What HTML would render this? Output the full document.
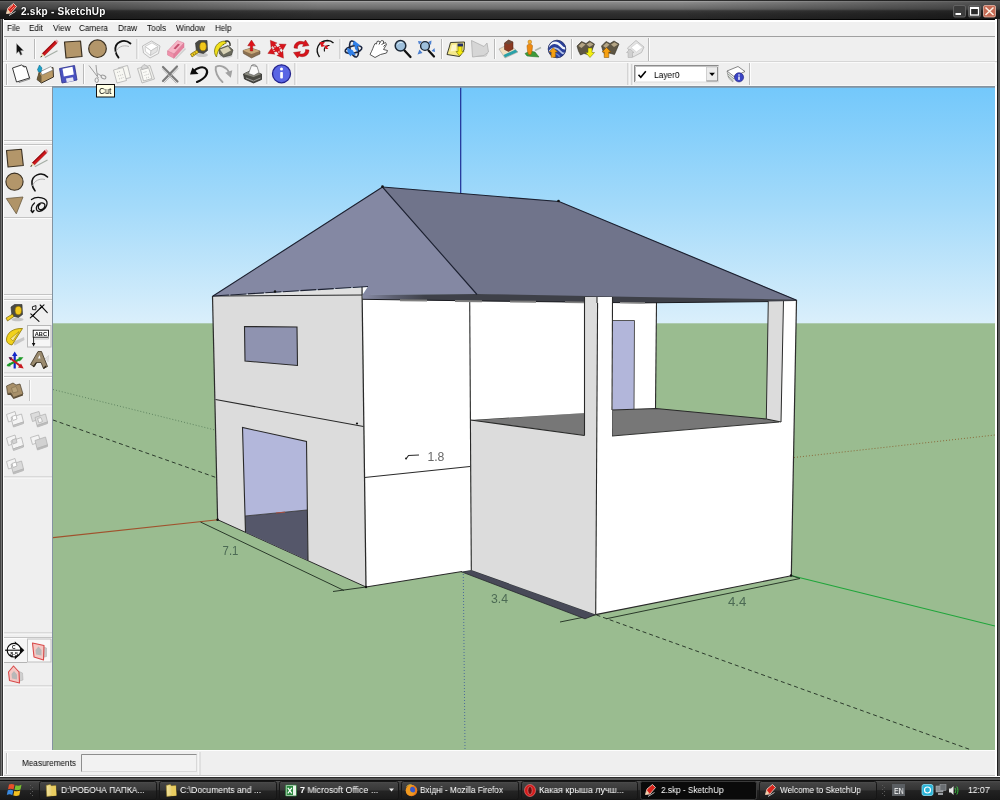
<!DOCTYPE html>
<html>
<head>
<meta charset="utf-8">
<title>2.skp - SketchUp</title>
<style>
html,body{margin:0;padding:0;}
body{width:1000px;height:800px;overflow:hidden;position:relative;background:#efefef;font-family:"Liberation Sans",sans-serif;font-size:9px;color:#000;}
.abs{position:absolute;}
#titlebar{left:0;top:0;width:1000px;height:20px;background:linear-gradient(90deg,rgba(0,0,0,0.42) 0,rgba(0,0,0,0.28) 12%,rgba(0,0,0,0) 32%,rgba(0,0,0,0) 68%,rgba(0,0,0,0.28) 88%,rgba(0,0,0,0.42) 100%),linear-gradient(#303030 0,#303030 1px,#a2a2a2 1px,#a0a0a0 1.8px,#8a8a8a 2.5px,#7c7c7c 5px,#6e6e6e 8px,#626262 9.3px,#3a3a3a 10.8px,#2e2e2e 14px,#272727 18.8px,#050505 19px,#050505 20px);}
#title{left:20px;top:3px;color:#fff;font-weight:bold;font-size:10.5px;line-height:13px;letter-spacing:0.2px;white-space:nowrap;}
#lborder{left:0;top:19px;width:4px;height:758px;background:linear-gradient(90deg,#464646 0,#464646 1px,#777 1px,#777 2px,#333 2px,#333 3px,#fff 3px,#fff 4px);}
#rborder{left:995px;top:19px;width:5px;height:758px;background:linear-gradient(90deg,#fff 0,#fff 2px,#1c1c1c 2px,#1c1c1c 3px,#5c5c5c 3px,#5c5c5c 5px);}
#menubar{left:3px;top:20px;width:994px;height:16px;background:linear-gradient(#fff 0,#fff 1.6px,#f0f0f0 2px,#f0f0f0 16px);border-bottom:1px solid #a0a0a0;}
.menu{position:absolute;top:24px;font-size:8.8px;line-height:11px;white-space:nowrap;}
#canvasborder{left:52px;top:86px;width:943px;height:664px;background:#8493a0;}
#scene{left:0;top:0;}
#statusbar{left:3px;top:750px;width:994px;height:25px;background:#efefef;border-bottom:1px solid #c4c4c4;}
#bborder{left:0;top:776px;width:1000px;height:5px;background:linear-gradient(#fff 0,#fff 1px,#2a2a2a 1px,#2a2a2a 2px,#585858 2px,#585858 4px,#101010 4px,#101010 5px);}
#taskbar{left:0;top:781px;width:1000px;height:19px;background:linear-gradient(#4e4e4e 0px,#404040 2px,#343434 8.6px,#222222 9.6px,#181818 19px);}
.tb{position:absolute;top:781px;height:18px;border-radius:2px;background:linear-gradient(#4e4e4e,#2a2a2a 45%,#1e1e1e);border:1px solid #0a0a0a;box-sizing:border-box;}
.tbt{position:absolute;top:785px;color:#fff;font-size:8.6px;line-height:11px;white-space:nowrap;}
.tx{position:absolute;white-space:nowrap;will-change:transform;transform-origin:0 0;}
.vsep{position:absolute;width:1px;background:#b4b4b4;border-right:1px solid #fff;}
.hsep{position:absolute;height:1px;background:#b4b4b4;border-bottom:1px solid #fff;}
</style>
</head>
<body>
<div id="titlebar" class="abs"></div>
<div id="menubar" class="abs"></div>
<div id="canvasborder" class="abs"></div>
<div id="statusbar" class="abs"></div>
<div id="lborder" class="abs"></div>
<div id="rborder" class="abs"></div>
<div id="bborder" class="abs"></div>
<div id="taskbar" class="abs"></div>
<!--SCENE-->
<svg id="scene" class="abs" width="1000" height="800" viewBox="0 0 1000 800" style="position:absolute;left:0;top:0;will-change:transform">
<defs>
<linearGradient id="sky" x1="0" y1="87" x2="0" y2="323" gradientUnits="userSpaceOnUse">
<stop offset="0" stop-color="#73c8fb"/><stop offset="0.5" stop-color="#a3dafa"/><stop offset="1" stop-color="#daeffb"/>
</linearGradient>
<linearGradient id="band" x1="362" y1="0" x2="425" y2="0" gradientUnits="userSpaceOnUse"><stop offset="0" stop-color="#8a8ea8"/><stop offset="0.5" stop-color="#5c5f70"/><stop offset="1" stop-color="#3e4048"/></linearGradient>
<clipPath id="cv"><rect x="53" y="87.7" width="942" height="662.3"/></clipPath>
</defs>
<g clip-path="url(#cv)">
<rect x="53" y="87" width="942" height="237" fill="url(#sky)"/>
<rect x="53" y="323.3" width="942" height="427" fill="#9abc90"/>
<!-- axes & guide lines on ground -->
<line x1="460.7" y1="87" x2="460.7" y2="194" stroke="#1c2c94" stroke-width="1.2"/>
<line x1="53" y1="537.6" x2="218" y2="519.7" stroke="#a0522d" stroke-width="1.1"/>
<line x1="53" y1="389.5" x2="215" y2="430" stroke="#5f8460" stroke-width="1" stroke-dasharray="1 2"/>
<line x1="53" y1="420" x2="216" y2="477.5" stroke="#2c3a2c" stroke-width="1" stroke-dasharray="4 3"/>
<line x1="794" y1="457.5" x2="995" y2="435" stroke="#8a6a3a" stroke-width="1" stroke-dasharray="1 2"/>
<line x1="791" y1="575.5" x2="995" y2="626" stroke="#1fa53a" stroke-width="1.2"/>
<line x1="596.5" y1="615" x2="970" y2="749.5" stroke="#2c3a2c" stroke-width="1" stroke-dasharray="4 3"/>
<line x1="463.3" y1="574" x2="465" y2="750" stroke="#4a6a9a" stroke-width="1" stroke-dasharray="1 2"/>
<!-- dimension lines -->
<line x1="200.5" y1="522" x2="344" y2="590.5" stroke="#2a3a2a" stroke-width="1"/>
<line x1="333" y1="591.5" x2="366" y2="587" stroke="#2a3a2a" stroke-width="1"/>
<line x1="560" y1="622" x2="596" y2="614.7" stroke="#2a3a2a" stroke-width="1"/>
<line x1="606" y1="618.8" x2="800" y2="578.5" stroke="#2a3a2a" stroke-width="1"/>
<line x1="791" y1="575.5" x2="800" y2="578.5" stroke="#2a3a2a" stroke-width="1"/>
<!-- back wall (white) behind balcony -->
<polygon points="597,299 656.5,300 655.5,412 597,412" fill="#ffffff"/>
<line x1="656.5" y1="301" x2="655.5" y2="409" stroke="#292929" stroke-width="1.1"/>
<!-- door in back wall -->
<polygon points="612.5,320.5 634.5,320.5 634,409 612.5,410" fill="#b2b6da"/>
<line x1="612" y1="320.5" x2="634.5" y2="320.5" stroke="#555" stroke-width="1"/>
<line x1="634.5" y1="320.5" x2="634" y2="409" stroke="#555" stroke-width="1"/>
<!-- balcony floor (dark) -->
<polygon points="612,410 656,408.5 766,419 779,422 612,436" fill="#777777"/>
<polygon points="470.4,420 584.5,412.5 584.5,435.5" fill="#777777"/>
<polyline points="612,410 656,408.5 766,419" fill="none" stroke="#292929" stroke-width="1.1"/>
<line x1="470" y1="420" x2="584.5" y2="412.5" stroke="#292929" stroke-width="1.1"/>
<!-- right column (col 2) -->
<polygon points="768.3,300 783.5,300 781,422 766.3,419" fill="#dcdcdc"/>
<polygon points="783.5,300 796.5,300 791.3,576 595.7,614.5 596.8,437 612,436 779,422 781,422" fill="#ffffff"/>
<line x1="768.3" y1="300" x2="766.3" y2="419" stroke="#2c2c2c" stroke-width="1"/>
<line x1="783.5" y1="300" x2="781" y2="422" stroke="#2c2c2c" stroke-width="1"/>
<line x1="796.5" y1="300" x2="791.3" y2="576" stroke="#2c2c2c" stroke-width="1.2"/>
<line x1="766.3" y1="419" x2="781" y2="422" stroke="#292929" stroke-width="1.1"/>
<line x1="612" y1="436" x2="779" y2="422" stroke="#333" stroke-width="1.05"/>
<line x1="612" y1="410" x2="612" y2="436" stroke="#333" stroke-width="1.05"/>
<!-- dark strip at ground front -->
<polygon points="461.4,571.8 471.3,570 595.7,614.5 585,618.8" fill="#484a58" stroke="#25262c" stroke-width="0.8"/>
<!-- centre white wall -->
<polygon points="362.5,295 469.7,299 471.3,570 462,571.5 366,587" fill="#ffffff"/>
<polygon points="469.7,299 586,299 586,413 470.4,420" fill="#ffffff"/>
<!-- grey wall (front small) + column 1 grey -->
<polygon points="470.4,420 584.5,435.5 584.5,298 597.6,298 595.7,614.5 471.3,570" fill="#dcdcdc"/>
<!-- column 1 white side -->
<polygon points="597.6,298 612.5,298 612,437 596.8,437" fill="#ffffff"/>
<line x1="469.7" y1="300" x2="471.3" y2="570" stroke="#292929" stroke-width="1.1"/>
<line x1="470.5" y1="420" x2="584.5" y2="435.5" stroke="#292929" stroke-width="1.1"/>
<line x1="584.5" y1="300" x2="584.5" y2="435.5" stroke="#292929" stroke-width="1.1"/>
<line x1="597.6" y1="300" x2="595.7" y2="614.5" stroke="#292929" stroke-width="1.1"/>
<line x1="612.5" y1="300" x2="612" y2="410" stroke="#292929" stroke-width="1.1"/>
<line x1="595.7" y1="614.6" x2="791.3" y2="575.8" stroke="#292929" stroke-width="1.1"/>
<line x1="366" y1="587" x2="462" y2="571.5" stroke="#292929" stroke-width="1.1"/>
<line x1="364.5" y1="477.5" x2="470" y2="466.5" stroke="#292929" stroke-width="1.1"/>
<polyline points="406,459 408.5,455.5 419,455" fill="none" stroke="#292929" stroke-width="1.1"/>
<circle cx="406" cy="458.5" r="1" fill="#222"/>
<!-- left grey wall -->
<polygon points="212.5,296 362.5,295 366,587 217.6,519.7" fill="#dcdcdc"/>
<polygon points="213,296 250,294 361,287.5 362.5,295" fill="#e0e0e0"/>
<polygon points="361,287.5 368,286.5 362.5,294.5" fill="#ffffff"/>
<line x1="212.5" y1="296" x2="217.6" y2="519.7" stroke="#2c2c2c" stroke-width="1.2"/>
<line x1="212.5" y1="296" x2="362.5" y2="295" stroke="#292929" stroke-width="1.1"/>
<line x1="362" y1="286.5" x2="366" y2="587" stroke="#292929" stroke-width="1.25"/>
<line x1="217.6" y1="519.7" x2="366" y2="587" stroke="#2c2c2c" stroke-width="1"/>
<line x1="215.5" y1="399.5" x2="363.5" y2="426.5" stroke="#292929" stroke-width="1.1"/>
<!-- window -->
<polygon points="244.5,326.5 297,327 297.5,365.5 245,361" fill="#8f93b0" stroke="#292929" stroke-width="1.1"/>
<!-- door left wall -->
<polygon points="242.5,427.5 306.5,441.5 307,510 245,516" fill="#b3b7db"/>
<polygon points="245,516 307,510 308,560.6 245.5,532.2" fill="#55576a"/>
<polyline points="245.5,532.2 242.5,427.5 306.5,441.5 308,560.6" fill="none" stroke="#292929" stroke-width="1.1"/>
<line x1="245" y1="516" x2="307" y2="510" stroke="#333" stroke-width="0.8"/>
<line x1="276" y1="513" x2="285" y2="512.1" stroke="#b85040" stroke-width="0.9"/>
<!-- roof -->
<polygon points="382.5,187 213,296 250,294 368,286.5 362.5,295 477,294.5" fill="#8488a3"/>
<polygon points="382.5,187 559,201.5 796.7,300 640,298 477,294.5" fill="#70748b"/>
<!-- roof underside band -->
<polygon points="362.5,295 477,294 640,297 796,299.5 796,301 768,301.5 640,303 585,302.3 470,301 363,299.3" fill="url(#band)"/>
<polyline points="362.5,299.3 470,300.8 585,302.2 640,302.9 768,301.6" fill="none" stroke="#1a1b20" stroke-width="1"/>
<line x1="400" y1="300.3" x2="427" y2="300.6" stroke="#808080" stroke-width="2"/>
<line x1="455" y1="300.9" x2="482" y2="301.2" stroke="#808080" stroke-width="2"/>
<line x1="510" y1="301.5" x2="536" y2="301.8" stroke="#7c7c7c" stroke-width="2"/>
<line x1="565" y1="302.1" x2="584" y2="302.3" stroke="#808080" stroke-width="1.8"/>
<line x1="620" y1="302.6" x2="645" y2="302.8" stroke="#8e8e8e" stroke-width="1.2"/>
<polygon points="585,297 597,297 597,303 585,303" fill="#dcdcdc"/><polygon points="597,297 612.5,297 612.5,303 597,303" fill="#fff"/><line x1="584.5" y1="297" x2="584.5" y2="303" stroke="#292929" stroke-width="1.1"/><line x1="597" y1="297" x2="597" y2="303" stroke="#292929" stroke-width="1.1"/><line x1="612.5" y1="297" x2="612.5" y2="303" stroke="#292929" stroke-width="1.1"/>
<polyline points="213,296 382.5,187 477,294.5" fill="none" stroke="#1c2030" stroke-width="1.15"/>
<polyline points="382.5,187 559,201.5 796.7,300.2" fill="none" stroke="#1c2030" stroke-width="1.15"/>
<line x1="213" y1="296" x2="368" y2="286.5" stroke="#1c2030" stroke-width="1.1" stroke-dasharray="16 1.5"/>
<circle cx="382.5" cy="186.5" r="1.3" fill="#111"/>
<circle cx="558.5" cy="201" r="1.3" fill="#111"/>
<circle cx="275" cy="291.5" r="1.2" fill="#111"/>
<circle cx="357" cy="423.5" r="1.1" fill="#111"/>
<circle cx="217.6" cy="519.7" r="1.3" fill="#111"/>
<circle cx="366" cy="587" r="1.2" fill="#111"/>
<circle cx="791" cy="575.5" r="1.2" fill="#111"/>
<!-- dimension texts -->
<g font-family="Liberation Sans, sans-serif" font-size="13" fill="#4c6a54">
<text x="222.6" y="554.6" textLength="15.8" lengthAdjust="spacingAndGlyphs">7.1</text>
<text x="491" y="603.2" textLength="17" lengthAdjust="spacingAndGlyphs">3.4</text>
<text x="728" y="606" textLength="18.4" lengthAdjust="spacingAndGlyphs">4.4</text>
<text x="427.4" y="460.8" textLength="17" lengthAdjust="spacingAndGlyphs" fill="#686868">1.8</text>
</g>
</g>
</svg>
<!--/SCENE-->
<!--CHROME-->
<svg class="abs" width="1000" height="800" viewBox="0 0 1000 800" style="position:absolute;left:0;top:0;will-change:transform">
<defs>
<linearGradient id="gBtn" x1="0" y1="0" x2="0" y2="1"><stop offset="0" stop-color="#505050"/><stop offset="0.1" stop-color="#444444"/><stop offset="0.47" stop-color="#383838"/><stop offset="0.53" stop-color="#242424"/><stop offset="1" stop-color="#1a1a1a"/></linearGradient>
<linearGradient id="gFold" x1="0" y1="0" x2="1" y2="0"><stop offset="0" stop-color="#f5e7a0"/><stop offset="1" stop-color="#d9b84a"/></linearGradient>
</defs>
<!-- toolbar separators horizontal -->
<rect x="3" y="61" width="994" height="1" fill="#d6d6d6"/>
<rect x="3" y="62" width="994" height="1" fill="#fafafa"/>
<rect x="3" y="85" width="994" height="1" fill="#f6f7f7"/><rect x="4" y="86" width="48" height="1" fill="#b8b8b8"/><rect x="4" y="87" width="48" height="1" fill="#fbfbfb"/>
<!-- toolbar grips -->
<g fill="#b9b9b9">
<rect x="6" y="39" width="1" height="21"/><rect x="6" y="64" width="1" height="21"/>
<rect x="34" y="39" width="1" height="20"/><rect x="136.500" y="39" width="1" height="20"/><rect x="237.500" y="39" width="1" height="20"/>
<rect x="339.500" y="39" width="1" height="20"/><rect x="441" y="39" width="1" height="20"/><rect x="494" y="39" width="1" height="20"/>
<rect x="571" y="39" width="1" height="20"/><rect x="648" y="38" width="1" height="23"/>
<rect x="83" y="64" width="1" height="20"/><rect x="184.500" y="64" width="1" height="20"/><rect x="237.500" y="64" width="1" height="20"/>
<rect x="266.500" y="64" width="1" height="20"/><rect x="294.500" y="63" width="1" height="22"/>
<rect x="627.500" y="63" width="1" height="22"/><rect x="631.500" y="64" width="1" height="21"/><rect x="749" y="63" width="1" height="22"/>
</g>
<g fill="#fdfdfd">
<rect x="7" y="39" width="1" height="21"/><rect x="7" y="64" width="1" height="21"/>
<rect x="35" y="39" width="1" height="20"/><rect x="137.500" y="39" width="1" height="20"/><rect x="238.500" y="39" width="1" height="20"/>
<rect x="340.500" y="39" width="1" height="20"/><rect x="442" y="39" width="1" height="20"/><rect x="495" y="39" width="1" height="20"/>
<rect x="572" y="39" width="1" height="20"/><rect x="649" y="38" width="1" height="23"/>
<rect x="84" y="64" width="1" height="20"/><rect x="185.500" y="64" width="1" height="20"/><rect x="238.500" y="64" width="1" height="20"/>
<rect x="267.500" y="64" width="1" height="20"/><rect x="295.500" y="63" width="1" height="22"/>
<rect x="628.500" y="63" width="1" height="22"/><rect x="632.500" y="64" width="1" height="21"/><rect x="750" y="63" width="1" height="22"/>
</g>
<!-- left toolbar separators -->
<g fill="#c4c4c4">
<rect x="4" y="140" width="48" height="1"/><rect x="4" y="144" width="48" height="1"/><rect x="4" y="217" width="48" height="1"/>
<rect x="4" y="294" width="48" height="1"/><rect x="4" y="299" width="48" height="1"/><rect x="4" y="372.500" width="48" height="1"/><rect x="4" y="376" width="48" height="1"/>
<rect x="4" y="404.500" width="48" height="1"/><rect x="4" y="476.500" width="48" height="1"/>
<rect x="4" y="632.500" width="48" height="1"/><rect x="4" y="637" width="48" height="1"/><rect x="4" y="685.500" width="48" height="1"/>
<rect x="29" y="380" width="1" height="21"/>
</g>
<g fill="#fcfcfc">
<rect x="4" y="141" width="48" height="1"/><rect x="4" y="145" width="48" height="1"/><rect x="4" y="218" width="48" height="1"/>
<rect x="4" y="295" width="48" height="1"/><rect x="4" y="300" width="48" height="1"/><rect x="4" y="373.500" width="48" height="1"/><rect x="4" y="377" width="48" height="1"/>
<rect x="4" y="405.500" width="48" height="1"/><rect x="4" y="477.500" width="48" height="1"/>
<rect x="4" y="633.500" width="48" height="1"/><rect x="4" y="638" width="48" height="1"/><rect x="4" y="686.500" width="48" height="1"/>
<rect x="30" y="380" width="1" height="21"/>
</g>
<!-- hovered buttons on left toolbar -->
<rect x="27.5" y="325.500" width="23.5" height="21.5" fill="#f6f6f6" stroke="#b8b8b8" stroke-width="1"/>
<rect x="27.5" y="639" width="23.5" height="23" fill="#f8f8f8" stroke="#c0c0c0" stroke-width="1"/>
<!-- status bar -->
<rect x="3" y="750" width="994" height="1" fill="#fdfdfd"/>
<rect x="6" y="753" width="1" height="21" fill="#c0c0c0"/><rect x="7" y="753" width="1" height="21" fill="#fdfdfd"/>
<rect x="81.500" y="754.500" width="115" height="17" fill="#f2f2f2" stroke="#d8d8d8" stroke-width="1"/><path d="M81.500 771.500 L81.500 754.500 L196.500 754.500" fill="none" stroke="#8e8e8e" stroke-width="1"/>
<rect x="198.500" y="752" width="1" height="23" fill="#fdfdfd"/><rect x="199.500" y="752" width="1" height="23" fill="#d0d0d0"/>
<!-- tooltip -->
<rect x="96.500" y="84.500" width="18" height="12.500" fill="#ffffe6" stroke="#111" stroke-width="1"/>
<!--ICONS-->
<!-- ROW 1 ICONS -->
<g id="row1">
<!-- select arrow -->
<path d="M16.500 43.500 L16.500 53.500 L18.800 51.500 L20.500 55.200 L22.200 54.400 L20.600 50.800 L23.600 50.600 Z" fill="#111" stroke="#aaa" stroke-width="0.5"/>
<!-- pencil -->
<g>
<path d="M44.80 57.40 L57.50 50.70" stroke="#a4ada4" stroke-width="1.1" fill="none"/>
<path d="M44.38 55.75 L57.27 43.01 L55.09 40.80 L42.20 53.55 Z" fill="#d3161b" stroke="#7a1010" stroke-width="0.45"/>
<path d="M42.20 53.55 L55.09 40.80 L55.79 41.51 L42.90 54.26 Z" fill="#9a0c12"/>
<path d="M57.27 43.01 L58.69 41.60 L56.51 39.40 L55.09 40.80 Z" fill="#eaa0a8"/>
<path d="M40.30 57.60 L44.38 55.75 L42.20 53.55 Z" fill="#e8cfa0"/>
<path d="M40.30 57.60 L42.14 56.76 L41.16 55.77 Z" fill="#1a1a1a"/>
</g>
<!-- rectangle -->
<path d="M64.500 42 L80.500 41 L82 56.500 L66 58 Z" fill="#b3966a" stroke="#3a3022" stroke-width="1.2" stroke-linejoin="round"/>
<!-- circle -->
<circle cx="97.500" cy="48.700" r="8.800" fill="#b3966a" stroke="#3a3022" stroke-width="1.2"/>
<!-- arc -->
<path d="M130.500 43.500 C124 38 114 42 115.500 51 C116 54 117 56 118.500 57.500" fill="none" stroke="#111" stroke-width="1.8" stroke-linecap="round"/>
<path d="M129 46.500 C123 44.500 117 47 115.500 53" fill="none" stroke="#aaa" stroke-width="0.9"/>
<!-- make component -->
<g stroke="#b0b0b0" stroke-width="0.800" stroke-linejoin="round">
<path d="M142.500 46 L151.500 41 L160 46 L158.500 53.500 L150 58 L143.500 53 Z" fill="#f2f2f2"/>
<path d="M145 46.500 L152 42.800 L158 46.500 L151 50.800 Z" fill="#ffffff" stroke="#c4c4c4"/>
<path d="M145 46.500 L151 50.800 L150.500 55.500 L145.500 51.500 Z" fill="#ffffff" stroke="#c4c4c4"/>
<path d="M151 50.800 L158 46.500 L157 51.500 L150.500 55.500 Z" fill="#e4e4e4" stroke="#c4c4c4"/>
</g>
<!-- eraser -->
<g>
<path d="M175.500 58.800 L185.500 48.500" stroke="#cfcfcf" stroke-width="1.600"/>
<path d="M167.500 51 L177.500 40.500 L184 43 L174 54 Z" fill="#f7b4c6" stroke="#d47a94" stroke-width="0.500"/>
<path d="M167.500 51 L174 54 L174 58.300 L167.500 55 Z" fill="#f090aa" stroke="#d47a94" stroke-width="0.500"/>
<path d="M174 54 L184 43 L184 47.300 L174 58.300 Z" fill="#e67f9c" stroke="#d47a94" stroke-width="0.500"/>
<path d="M173.500 48.500 L178 43.700 L180 44.500 L175.500 49.300 Z" fill="#c4506e"/>
</g>
<!-- tape measure -->
<g>
<ellipse cx="202" cy="55" rx="6" ry="2" fill="#c9c9c9"/>
<path d="M195.500 43 L199 40.500 L207 40.500 L207.500 50.500 L203.500 53.500 L196.500 52 Z" fill="#4a4a44" stroke="#2a2a28" stroke-width="0.6"/>
<ellipse cx="203" cy="46.500" rx="3.300" ry="4.300" fill="#f2c81c" stroke="#8a6a00" stroke-width="0.6"/>
<path d="M190.500 54 L197 50 L198.500 52.500 L192 57 Z" fill="#f0cc20" stroke="#5a4a00" stroke-width="0.6"/>
<path d="M193 53.500 L194 55 M195 52.300 L196 53.800" stroke="#3a3000" stroke-width="0.6"/>
</g>
<!-- paint bucket -->
<g>
<ellipse cx="226" cy="56" rx="6.500" ry="1.800" fill="#cfcfcf"/>
<path d="M219 49 L228 45.500 L233 50 L231.500 55 L223.500 57 L219.500 54 Z" fill="#6a6a5c" stroke="#33332c" stroke-width="0.6"/>
<path d="M220 49.500 L228 46.500 L231 50.500 L223.500 54.500 Z" fill="#d9d3b6"/>
<path d="M223 45 C224 39.500 231 39.500 230 46" fill="none" stroke="#33332c" stroke-width="1.400"/>
<path d="M214.500 51 C215 45 219 41.500 224.500 41 L226.500 43 C221 45 218 49 216.500 57 C215 55 214.500 53 214.500 51 Z" fill="#f2e11c" stroke="#6a6400" stroke-width="0.7"/>
</g>
<!-- push/pull -->
<g>
<path d="M243 50.500 L251 48 L260 51 L260 54 L251.500 58 L243.500 53.500 Z" fill="#8a6f50" stroke="#4a3a28" stroke-width="0.5"/>
<path d="M243 50.500 L251 48 L260 51 L251.500 54 Z" fill="#c9a878"/>
<path d="M251.500 40 L255.300 45.800 L252.700 45.800 L252.700 51 L250.300 51 L250.300 45.800 L247.700 45.800 Z" fill="#e01018" stroke="#8a0a0a" stroke-width="0.4"/>
</g>
<!-- move -->
<g fill="#d8141c" stroke="#8a0a0a" stroke-width="0.3">
<path d="M278.2 48.4 L275.0 44.1 L277.1 43.0 L270.3 40.3 L271.0 47.5 L272.6 45.8 L275.8 50.2 Z"/>
<path d="M277.7 50.6 L281.9 48.3 L282.6 50.5 L286.2 44.2 L278.9 43.9 L280.4 45.7 L276.3 48.0 Z"/>
<path d="M275.8 50.2 L278.9 54.4 L276.8 55.4 L283.5 58.2 L282.9 51.0 L281.3 52.6 L278.2 48.4 Z"/>
<path d="M276.4 47.9 L272.5 49.7 L271.9 47.4 L267.8 53.4 L275.0 54.3 L273.7 52.4 L277.6 50.7 Z"/>
<circle cx="277" cy="49.3" r="2.3" stroke="none"/>
</g>
<g fill="#fff"><circle cx="275.0" cy="46.7" r="0.7"/><circle cx="279.9" cy="47.7" r="0.7"/><circle cx="278.9" cy="52.0" r="0.7"/><circle cx="274.0" cy="50.6" r="0.7"/></g>
<!-- rotate -->
<g>
<path d="M294 48 C294 42.500 299.500 40 304 42 L305.500 40 L309 45.500 L302.500 46.500 L303.500 44.500 C300 43 297 45 297.500 48.500 Z" fill="#d8141c" stroke="#8a0a0a" stroke-width="0.4"/>
<path d="M309 50 C309 55.500 303.500 58 299 56 L297.500 58 L293.500 52.500 L300.500 51.500 L299.500 53.500 C303 55 306 53 305.500 49.500 Z" fill="#d8141c" stroke="#8a0a0a" stroke-width="0.4"/>
</g>
<!-- offset -->
<g>
<path d="M319.500 57 C314.500 50 318 41 327.500 40.500 C330 40.500 332 41.500 333.500 43" fill="none" stroke="#111" stroke-width="1.300"/>
<path d="M324.500 51.500 C323.500 47.500 326 45 329.500 45.500" fill="none" stroke="#111" stroke-width="1.100"/>
<path d="M319.500 42 L325 42 L323 44.500 L325 46 L321.500 47 Z" fill="#d8141c"/>
<path d="M324.500 45.500 L328.500 46 L327 47.500 L328.500 49 L325.500 49 Z" fill="#d8141c"/>
</g>
<!-- orbit -->
<g>
<ellipse cx="353.500" cy="49.500" rx="8.500" ry="3.600" fill="none" stroke="#1a2540" stroke-width="1.600" transform="rotate(-12 353.500 49.500)"/>
<ellipse cx="354" cy="49" rx="3.800" ry="8.300" fill="none" stroke="#1a2540" stroke-width="1.600" transform="rotate(-18 354 49)"/>
<path d="M354 40.500 L360.500 45.500 L357.500 46 L358 52 L355 49 L354.500 45 L352.500 45 Z" fill="#2f7fe8"/>
<path d="M347 48 L352.500 50 L356 55.500 L352 54.500 L350.500 56.500 L347.500 52 Z" fill="#2f7fe8"/>
</g>
<!-- pan (hand) -->
<g>
<path d="M370 54.500 C372.500 50 373.500 46 375 43.500 L376.500 44 L377 41.500 L379 41 L380 42.500 L381.500 40.500 L383.500 41 L383.500 43.500 L385.500 42.500 L386.500 44.500 L383.500 49.500 L387.500 50.500 L386.500 53 L380.500 54.500 L375 57.500 Z" fill="#fff" stroke="#444" stroke-width="0.9" stroke-linejoin="round"/>
<path d="M379 44.500 L380 42.500 M381.500 45 L383.500 43 M383.500 46.500 L385.500 44.500" stroke="#222" stroke-width="0.8"/>
</g>
<!-- zoom -->
<g>
<path d="M404.500 50.500 L410.500 57" stroke="#111" stroke-width="2.300" stroke-linecap="round"/>
<circle cx="400.500" cy="45.800" r="5.300" fill="#9ec0dc" stroke="#1c2836" stroke-width="1.500"/>
<path d="M397.500 44.500 C398.500 42.500 400.500 42 402.500 42.500" stroke="#dff0fb" stroke-width="1" fill="none"/>
</g>
<!-- zoom extents -->
<g>
<path d="M418 41 L422 41.500 L419 44.500 Z M431.500 40.500 L431 45 L428 42 Z M417.500 54.500 L419.500 49.500 L422.500 53 Z M434.500 48 L435 52 L431.500 51 Z" fill="#4a7fd0"/>
<path d="M428.500 50.500 L434 56.500" stroke="#111" stroke-width="2.200" stroke-linecap="round"/>
<circle cx="425" cy="46" r="4.400" fill="#9ec0dc" stroke="#1c2836" stroke-width="1.400"/>
</g>
<!-- previous view (yellow) -->
<g>
<path d="M450.500 42.500 L464.500 42 L464 50 L459.500 56.500 L447 54.500 L449 48 Z" fill="#f5e98a" stroke="#3a3a2a" stroke-width="1"/>
<path d="M452 45 L456 44.500 L456 50.500 L450.500 51.500 Z" fill="#fdf7c8"/>
<path d="M457.500 43.500 L463 43.500 L463 46.500 L457.500 46.500 Z" fill="#24306a"/>
<path d="M458 46.500 L462 46.500 L462 51.500 L464 51.500 L459.500 56 L456 51.500 L458 51.500 Z" fill="#f5ea10" stroke="#5a5a00" stroke-width="0.5"/>
</g>
<!-- next view (gray) -->
<g>
<path d="M471.500 40.500 L484 46.500 L487 43 L488.500 52 L484 55.500 L472.500 57 Z" fill="#d6d6d6" stroke="#aeaeae" stroke-width="0.800"/>
<path d="M476 56.500 L486 56 L487.500 53" fill="none" stroke="#b8b8b8" stroke-width="0.800"/>
</g>
<!-- get models: building on tile -->
<g>
<path d="M499 49 L509 44 L518 52 L505 58 Z" fill="#f2e0c0" stroke="#8a8a8a" stroke-width="0.500"/>
<path d="M503.500 55 L515.500 49.500 L517.500 52 L505 57.500 Z" fill="#2aa0a8"/>
<path d="M504.500 43 L508.500 40 L513 42 L513 49 L508.500 51.500 L504.500 49.500 Z" fill="#8a3a22" stroke="#4a1a10" stroke-width="0.500"/>
<path d="M504.500 43 L508.500 40 L513 42 L508.500 44.500 Z" fill="#6a4a3a"/>
</g>
<!-- person -->
<g>
<path d="M535 50.500 L541 47.500" stroke="#b0b8b0" stroke-width="1.500"/>
<path d="M525 53.500 L530 51 L535 52 L539 57 L532 56.500 L527 56 Z" fill="#3e9a3a" stroke="#1e6a1e" stroke-width="0.500"/>
<path d="M527 46 C527 43.500 532.500 43.500 532.500 46 L532 51 L531 54.500 L528.500 54.500 L527.500 51 Z" fill="#f08a10" stroke="#a05a00" stroke-width="0.500"/>
<circle cx="529.800" cy="42" r="1.900" fill="#f6b030" stroke="#a05a00" stroke-width="0.400"/>
</g>
<!-- globe -->
<g>
<clipPath id="gl"><circle cx="557" cy="49" r="8.600"/></clipPath>
<circle cx="557" cy="49" r="8.800" fill="#2a3f9a"/>
<g clip-path="url(#gl)" fill="none" stroke-linecap="round">
<path d="M548 47 C552 40.500 558 42.500 561 46 C563 48.500 565 49 567 47.500" stroke="#f0f4fa" stroke-width="2.300"/>
<path d="M549 51.500 C553 46.500 557.500 47.500 560 51 C562 53.500 564 54.500 566.500 53" stroke="#b8c8ec" stroke-width="1.800"/>
<path d="M551 56 C554 52.500 557 53 559.500 56.500" stroke="#6a86d0" stroke-width="1.500"/>
</g>
<circle cx="557" cy="49" r="8.800" fill="none" stroke="#1a2660" stroke-width="0.800"/>
<path d="M553.300 47.800 L557.500 52 L555.400 52 L555.400 57.300 L551.200 57.300 L551.200 52 L549.100 52 Z" fill="#f7a010" stroke="#8a5a00" stroke-width="0.500"/>
</g>
<!-- 3d warehouse get -->
<g>
<path d="M577 46 L581.500 41.500 L586 43.500 L589.500 41 L594.500 44 L590 55 L584 53.500 L580.500 55 L578.500 51 Z" fill="#5e5644" stroke="#2e2a20" stroke-width="0.600"/>
<path d="M578.500 46 L582 42.800 L585.500 44.500 L581.500 48 Z" fill="#b4a585"/>
<path d="M586.500 44.500 L590 42.300 L593.500 44.500 L589.500 47 Z" fill="#b4a585"/>
<path d="M588 48 L592 48 L592 52.500 L594.500 52.500 L590 57.500 L585.500 52.500 L588 52.500 Z" fill="#f5f010" stroke="#6a6a00" stroke-width="0.500"/>
</g>
<!-- share -->
<g>
<path d="M601.500 46 L606 41.500 L610 43.500 L614 41 L619 44 L614.500 54.500 L609 53 L605 55 L603 51 Z" fill="#5e5644" stroke="#2e2a20" stroke-width="0.600"/>
<path d="M603 46 L606.500 42.800 L609.500 44.500 L606 48 Z" fill="#b4a585"/>
<path d="M611 44.500 L614.500 42.300 L618 44.500 L614 47 Z" fill="#b4a585"/>
<path d="M606.500 47.500 L611 52 L608.800 52 L608.800 57.500 L604.200 57.500 L604.200 52 L602 52 Z" fill="#f7a010" stroke="#7a4a00" stroke-width="0.500"/>
</g>
<!-- gray house -->
<g>
<path d="M627.500 48 L636 40.500 L644 47 L641.500 52.500 L633 57 Z" fill="#e4e4e4" stroke="#b4b4b4" stroke-width="0.800"/>
<path d="M631 47.500 L637 43 L642.500 47.500 L636.500 52 Z" fill="#ffffff" stroke="#c4c4c4" stroke-width="0.500"/>
<path d="M630 49 L634 52.500 L632.500 52.500 L632.500 57.500 L628 57.500 L628 52.500 L626.500 52.500 Z" fill="#d0d0d0" stroke="#a8a8a8" stroke-width="0.500"/>
</g>
</g>
<!-- ROW 2 ICONS -->
<g id="row2">
<!-- new -->
<g>
<path d="M14.500 69 L24 65.500 L30 79 L19 82.500 Z" fill="#e8e8e8" stroke="#555" stroke-width="0.600"/>
<path d="M12.500 68 L21.500 65 L24 67 L26 66.500 L29.500 78 L16.500 82 Z" fill="#ffffff" stroke="#222" stroke-width="0.900" stroke-linejoin="round"/>
</g>
<!-- open -->
<g>
<path d="M37 79.500 L40 72 L53 67.500 L53.500 77 L41.500 83 Z" fill="#b99a66" stroke="#2a2218" stroke-width="0.900" stroke-linejoin="round"/>
<path d="M40.500 71.500 L51 66.500 L53 70 L42 75 Z" fill="#ffffff" stroke="#555" stroke-width="0.500"/>
<path d="M38.500 72 L41.500 76 L41.500 83 L37 79.500 Z" fill="#6a5a3a"/>
<path d="M37.500 69.500 L39.500 65 L42 68 L41 72 L38.500 72 Z" fill="#1aa0c8" stroke="#0a6080" stroke-width="0.500"/>
</g>
<!-- save -->
<g>
<path d="M59.500 68.500 L74.500 65.500 L77 80 L62 83 Z" fill="#4a52c0" stroke="#2a2e8a" stroke-width="0.800" stroke-linejoin="round"/>
<path d="M62.500 68.700 L72.500 66.800 L73.800 74.500 L63.800 76.500 Z" fill="#ffffff"/>
<path d="M66 78.500 L73 77.200 L73.700 81 L66.700 82.200 Z" fill="#e4e4f4"/>
</g>
<!-- cut (gray) -->
<g fill="none" stroke="#9c9c9c" stroke-width="1">
<path d="M89 65.500 L98.500 78"/>
<path d="M96 65 L96.500 70 L97.500 76"/>
<ellipse cx="96.700" cy="80.200" rx="1.700" ry="2.300"/>
<ellipse cx="103.500" cy="77" rx="2.500" ry="1.700" transform="rotate(25 103.500 77)"/>
<path d="M97.500 73.500 L101.500 76"/>
</g>
<!-- copy (gray) -->
<g fill="#f7f7f2" stroke="#b0b0b0" stroke-width="0.800">
<path d="M118 68 L127.500 65.500 L130.500 77.500 L121 80 Z"/>
<path d="M113.500 70 L123 67.500 L126.500 80.500 L117 83 Z"/>
<path d="M117 72.500 L120 71.500 M118 76 L123 74.500 M119 79 L123.500 77.500" stroke-dasharray="1 1"/>
</g>
<!-- paste (gray) -->
<g fill="#f0f0ec" stroke="#b0b0b0" stroke-width="0.800">
<path d="M137.500 68.500 L150 65.500 L154.500 79 L142 83 Z"/>
<path d="M140.500 69.500 L148.500 67.500 L152 78.500 L143.500 81 Z" fill="#fafaf6"/>
<path d="M141.500 67 L144 64.500 L147 66 L148 68 L142 69.500 Z" fill="#d8d8d8"/>
<path d="M143.500 72.500 L147 71.500 M144.500 75.500 L149 74 M146 78 L149.500 77" stroke-dasharray="1 1"/>
</g>
<!-- delete X (gray) -->
<g stroke="#7a7a7a" stroke-width="2.200" stroke-linecap="round">
<path d="M163 67 L177.500 81.500"/><path d="M177 66.500 L163 81"/>
</g>
<g stroke="#b8b8b8" stroke-width="1" stroke-linecap="round">
<path d="M162.500 69 L176 83"/><path d="M178 68.500 L164.500 82.500"/>
</g>
<!-- undo -->
<path d="M197 82 C206 78 208.500 73 206.500 69.500 C204 65.500 197 67 192.500 72.500" fill="none" stroke="#0c0c0c" stroke-width="2.100" stroke-linecap="round"/>
<path d="M190 74.500 L192.500 67.500 L198.500 74 Z" fill="#0c0c0c"/>
<!-- redo (gray) -->
<path d="M222.500 82 C217.500 77.500 214.800 71 215.800 67 C219.500 64.500 226.500 66.500 229 72.500" fill="none" stroke="#a2a2a2" stroke-width="1.900" stroke-linecap="round" stroke-linejoin="round"/>
<path d="M225.200 72.800 L232.300 70.300 L230.800 77.800 Z" fill="#a2a2a2"/>
<!-- print -->
<g>
<path d="M243.500 74 L251 70.500 L261.500 74 L261.500 79.500 L253.500 83 L244.500 79 Z" fill="#4a4a44" stroke="#1a1a18" stroke-width="0.700"/>
<path d="M243.500 74 L251 70.500 L261.500 74 L253.500 77 Z" fill="#8a8a80"/>
<path d="M248.500 73.500 L251.500 65.500 L257 66.500 L259 72.500 L254 75.500 Z" fill="#fafafa" stroke="#555" stroke-width="0.600"/>
<path d="M251.500 65.500 C253 64 256 64.500 257 66.500" fill="none" stroke="#555" stroke-width="0.600"/>
<path d="M246 78 L253.500 81 L260.500 78" fill="none" stroke="#cfcfcf" stroke-width="0.600"/>
</g>
<!-- info -->
<circle cx="281.500" cy="73.800" r="9" fill="#5a66e4" stroke="#23238e" stroke-width="1.300"/>
<circle cx="281.500" cy="69" r="1.500" fill="#fff"/>
<rect x="280.200" y="72" width="2.700" height="6.500" rx="0.800" fill="#fff"/>
</g>
<!-- LAYER TOOLBAR -->
<g id="layerbar">
<rect x="634.500" y="65.500" width="84" height="16.500" fill="#ffffff" stroke="#dcdcdc" stroke-width="1"/><path d="M634.500 82 L634.500 65.500 L718.500 65.500" fill="none" stroke="#8c8c8c" stroke-width="1"/>
<path d="M635.500 81 L635.500 66.500 L717.500 66.500" fill="none" stroke="#c4c4c4" stroke-width="1"/>
<rect x="706.500" y="67" width="11" height="14" fill="#ececec" stroke="#c8c8c8" stroke-width="0.800"/>
<path d="M706.500 81 L717.500 81 L717.500 67" fill="none" stroke="#8a8a8a" stroke-width="0.900"/>
<path d="M709.200 72.700 L715 72.700 L712.100 76 Z" fill="#000"/>
<path d="M638.500 74.800 L640.800 77.200 L645.800 71.300" fill="none" stroke="#000" stroke-width="1.600"/>
<!-- layer icon -->
<g>
<path d="M727 71 L738 66.500 L745 71.500 L734 76.500 Z" fill="#ffffff" stroke="#555" stroke-width="0.700"/>
<path d="M727.500 73.500 L734 79 M728 76 L733.500 81 " stroke="#6a7a6a" stroke-width="0.700" fill="none"/>
<path d="M727 71 L727.500 73.500 L728 76 L729 78.500 L733 82" fill="none" stroke="#777" stroke-width="0.600"/>
<circle cx="739" cy="77.300" r="4.600" fill="#3a44c4" stroke="#20207a" stroke-width="0.600"/>
<circle cx="739" cy="75" r="0.800" fill="#fff"/><rect x="738.300" y="76.500" width="1.400" height="3.400" fill="#fff"/>
</g>
</g>
<!-- LEFT TOOLBAR ICONS -->
<g id="leftbar">
<!-- rectangle -->
<path d="M6.500 150.500 L21.500 149.300 L23.300 165.500 L8 167 Z" fill="#b3966a" stroke="#3a3022" stroke-width="1.100" stroke-linejoin="round"/>
<!-- pencil -->
<g>
<path d="M34.80 166.70 L47.50 160.00" stroke="#a4ada4" stroke-width="1.1" fill="none"/>
<path d="M34.38 165.06 L46.96 152.71 L44.79 150.50 L32.21 162.85 Z" fill="#d3161b" stroke="#7a1010" stroke-width="0.45"/>
<path d="M32.21 162.85 L44.79 150.50 L45.49 151.21 L32.91 163.56 Z" fill="#9a0c12"/>
<path d="M46.96 152.71 L48.39 151.31 L46.21 149.09 L44.79 150.50 Z" fill="#eaa0a8"/>
<path d="M30.30 166.90 L34.38 165.06 L32.21 162.85 Z" fill="#e8cfa0"/>
<path d="M30.30 166.90 L32.15 166.07 L31.16 165.07 Z" fill="#1a1a1a"/>
</g>
<!-- circle -->
<circle cx="14.500" cy="181.700" r="8.600" fill="#b3966a" stroke="#3a3022" stroke-width="1.100"/>
<!-- arc -->
<path d="M47.500 177 C41.500 171 31 175 32 184 C32.500 187 33.500 189 35 190.800" fill="none" stroke="#111" stroke-width="1.600" stroke-linecap="round"/>
<path d="M45 179.500 C39.500 178 34 181 32.500 186" fill="none" stroke="#aaa" stroke-width="0.900"/>
<!-- polygon (triangle) -->
<path d="M6.300 198.500 L23 197 L16.300 213.800 Z" fill="#b09468" stroke="#6a5a40" stroke-width="0.800" stroke-linejoin="round"/>
<!-- freehand -->
<path d="M31.500 199.500 C37 195.500 48 197.500 47 204 C46 210 38 214 36.500 209.500 C35.500 205 41 201.500 44 203.500 C47 206 42 211.500 39 209 C37.500 207.500 38.500 205 40 204.500 M34.500 203 C31 206 30.500 210 32.500 212.500 L31 210.500 M32.500 212.500 L34 210.500" fill="none" stroke="#111" stroke-width="1.300" stroke-linecap="round"/>
<!-- tape measure -->
<g>
<ellipse cx="17.500" cy="319.500" rx="6" ry="1.800" fill="#c4c4c4"/>
<path d="M11 307 L14.500 304.500 L22 304.500 L22.500 314.500 L18.500 317.500 L12 316 Z" fill="#4a4a44" stroke="#2a2a28" stroke-width="0.600"/>
<ellipse cx="18.300" cy="310.500" rx="3.200" ry="4.200" fill="#f2c81c" stroke="#8a6a00" stroke-width="0.600"/>
<path d="M6 318 L12.500 314 L14 316.500 L7.500 321 Z" fill="#f0cc20" stroke="#5a4a00" stroke-width="0.600"/>
</g>
<!-- dimension -->
<g stroke="#0c0c0c" stroke-width="1.100" fill="none" stroke-linecap="round">
<path d="M32.500 315.800 L42 306.500"/>
<path d="M40.200 305 L47.300 312.600 M30.800 313.800 L39 321.300"/>
<path d="M39.800 308.600 L44 304.800 M30.300 317.800 L34.600 314"/>
<path d="M32.800 306.600 L36 305.600 L35.800 309.800 L32.900 309.600 Z" stroke-width="0.900"/>
</g>
<!-- protractor -->
<g>
<path d="M13 342 L24 337 L24.500 340 L14.500 345.500 Z" fill="#c8c8c8"/>
<path d="M6.500 340.500 C6 333 13 328 22.500 328.500 L12 345 C9 344.500 7 343 6.500 340.500 Z" fill="#f2d21c" stroke="#8a7400" stroke-width="0.800"/>
<path d="M10.500 338.500 L19 331.500 L13 341 Z" fill="#f8e890" stroke="#8a7400" stroke-width="0.500"/>
</g>
<!-- text tool -->
<g>
<rect x="33.200" y="330.200" width="15.300" height="7" fill="#fff" stroke="#111" stroke-width="0.900"/>
<text x="34.700" y="336.100" font-family="Liberation Sans, sans-serif" font-weight="bold" font-size="5.600" fill="#111" textLength="12.300" lengthAdjust="spacingAndGlyphs">ABC</text>
<path d="M33.600 337 L33.600 344" stroke="#111" stroke-width="0.900"/>
<path d="M31.800 343 L35.400 343 L33.600 346.500 Z" fill="#111"/>
<path d="M35 339 L48.500 339 L48.500 336" stroke="#aaa" stroke-width="0.700" fill="none"/>
</g>
<!-- axes -->
<g>
<path d="M14.700 368.500 L14.700 355" stroke="#1428c8" stroke-width="2.200"/>
<path d="M14.700 351.500 L17.500 356 L12 356 Z" fill="#1428c8"/>
<path d="M7.500 365.500 L21 358.500" stroke="#1e9a28" stroke-width="2"/>
<path d="M23.500 357.200 L19.500 361.500 L18.500 357.200 Z" fill="#1e9a28"/>
<path d="M6.500 366 L10 362.500 L10.500 366.500 Z" fill="#1e9a28"/>
<path d="M10 358 L21 366.500" stroke="#c81a20" stroke-width="2"/>
<path d="M23.700 368.500 L18 367.500 L21 363.500 Z" fill="#c81a20"/>
<path d="M8.500 357 L12.500 357.500 L10.500 360.500 Z" fill="#5a1a50"/>
</g>
<!-- 3d text -->
<g>
<path d="M30.500 364.500 L38 351.500 L41.500 351.500 L47.500 366.500 L43.500 368.500 L41 362.500 L36.500 362.500 L34.500 366.500 Z" fill="#9a8a6e" stroke="#3a3020" stroke-width="0.800" stroke-linejoin="round"/>
<path d="M38 358.500 L39.500 355 L40.500 358.500 Z" fill="#f0f0f0"/>
<path d="M33 367 L36.500 362.500 M43.500 368.500 L46 366" stroke="#2a2418" stroke-width="1.200"/>
<path d="M45 359 L48.500 355.500 L48 362" fill="#e0e0e0" stroke="#c0c0c0" stroke-width="0.500"/>
</g>
<!-- brown blocks -->
<g>
<path d="M6.500 386 L13 383 L16 385 L20 384 L23 394 L13.500 397.500 L11 393 L7.500 393.500 Z" fill="#a8906a" stroke="#4a3e2a" stroke-width="0.700" stroke-linejoin="round"/>
<path d="M7.500 393.500 L11 393 L13.500 397.500 L23 394 L23 395.500 L13.500 399 L10.500 395 L7.500 395 Z" fill="#5a4a32"/>
<path d="M11.500 388 L16 386.500 L18 391.500 L13 393 Z" fill="#b8a27a" stroke="#6a5a40" stroke-width="0.400"/>
</g>
<!-- gray solid tools -->
<g fill="#f4f4f4" stroke="#b2b2b2" stroke-width="0.800" stroke-linejoin="round">
<path d="M6.500 414.500 L15 411.500 L17 419 L8.500 422 Z"/>
<path d="M11 417.500 L21.500 414 L23.500 422 L13 425.500 Z"/>
<path d="M12 416.500 L16 415 L17 419 L13 420.500 Z" fill="#fff"/>
<path d="M13 425.500 L23.500 422 L23.500 423.500 L13.500 427 Z" fill="#c8c8c8"/>

<path d="M30.500 414 L39 411.500 L41 418.500 L32.500 421.500 Z" fill="#dcdcdc"/>
<path d="M35 417.500 L45.500 414 L47.500 422 L37 425.500 Z" fill="#dcdcdc"/>
<path d="M37.500 418.500 L41 417.500 L42.500 421.500 L39 423 Z" fill="#f4f4f4"/>
<path d="M37 425.500 L47.500 422 L47.500 423.500 L37.500 427 Z" fill="#c0c0c0"/>

<path d="M6.500 438 L15 435 L17 442.500 L8.500 445.500 Z"/>
<path d="M11 441 L21.500 437.500 L23.500 445.500 L13 449 Z"/>
<path d="M12 440 L16 438.500 L17 442.500 L13 444 Z" fill="#d4d4d4"/>
<path d="M13 449 L23.500 445.500 L23.500 447 L13.500 450.500 Z" fill="#c8c8c8"/>

<path d="M30.500 437.500 L38.500 435 L40.500 441.500 L32.500 444.500 Z"/>
<path d="M35 440.500 L45.500 437 L47.500 445 L37 448.500 Z" fill="#d2d2d2"/>
<path d="M37 448.500 L47.500 445 L47.500 446.500 L37.500 450 Z" fill="#bcbcbc"/>

<path d="M6.500 461.500 L15 458.500 L17 466 L8.500 469 Z"/>
<path d="M11 464.500 L21.500 461 L23.500 469 L13 472.500 Z" fill="#dadada"/>
<path d="M12 463.500 L16 462 L17 466 L13 467.500 Z" fill="#fff"/>
<path d="M13 472.500 L23.500 469 L23.500 470.500 L13.500 474 Z" fill="#c0c0c0"/>
</g>
<!-- position camera -->
<g>
<rect x="4" y="639" width="23" height="23" fill="#f5f5f5"/>
<rect x="4" y="662" width="23" height="1" fill="#b4b4b4"/>
<path d="M14.800 641.200 L24.300 650.200 L14.800 659.600 Z" fill="#0a0a0a"/>
<circle cx="14" cy="650.200" r="6.800" fill="#fff" stroke="#0a0a0a" stroke-width="1.200"/>
<path d="M5 650.200 L23 650.200" stroke="#0a0a0a" stroke-width="1.100"/>
<text x="12" y="648.600" font-family="Liberation Sans, sans-serif" font-weight="bold" font-size="5" fill="#111">C</text>
<text x="10.200" y="656.300" font-family="Liberation Sans, sans-serif" font-weight="bold" font-size="4.600" fill="#111" textLength="7.800" lengthAdjust="spacingAndGlyphs">8·5</text>
</g>
<!-- section plane -->
<g>
<path d="M39 645.500 L46.500 648 L46.500 656.500 L39.500 658.500 Z" fill="#c8c8c8" stroke="#aaa" stroke-width="0.500"/>
<path d="M32.500 643 L44 645.500 L43.500 660 L34 657 Z" fill="#f4c8c4" stroke="#d84848" stroke-width="1.100" stroke-linejoin="round"/>
<path d="M35.500 650 L38.500 646.500 L41.500 650 L41.500 655.500 L36 654.500 Z" fill="#b8b8b8"/>
</g>
<!-- pink house -->
<g>
<path d="M16 670 L22.500 673 L23 680 L16.500 682 Z" fill="#cfcfcf" stroke="#aaa" stroke-width="0.500"/>
<path d="M8.500 672 L13.500 666 L19 672 L19.500 683 L9.500 680.500 Z" fill="#f4c8c4" stroke="#d84848" stroke-width="1.100" stroke-linejoin="round"/>
<path d="M11.500 674 L14 671 L17 674.500 L17 679.500 L12 678.500 Z" fill="#b8b8b8"/>
</g>
</g>
<!--/ICONS-->
<!--TASKBAR-->
<!-- TITLE BAR ICON & BUTTONS -->
<g id="titlestuff">
<path d="M6.500 13.500 L8 8 L13.500 3.500 L16.500 6.500 L11 13 Z" fill="#d8241c" stroke="#f0e0d0" stroke-width="0.900"/>
<path d="M6.500 13.500 L8 9.500 L10.500 12.500 Z" fill="#f0d8b0"/>
<path d="M9 9 L13 5 M10.500 10.500 L14.500 6.500" stroke="#f6b0a0" stroke-width="0.700"/>
<path d="M9 15.500 L15.500 11.500" stroke="#ddd" stroke-width="0.900"/>
<rect x="953.500" y="5.500" width="12" height="11.500" rx="1.500" fill="#3c3c3c" stroke="#6a6a6a" stroke-width="0.800"/>
<rect x="955.500" y="13" width="5.500" height="2" fill="#fff"/>
<rect x="968.500" y="5.500" width="12" height="11.500" rx="1.500" fill="#3c3c3c" stroke="#6a6a6a" stroke-width="0.800"/>
<rect x="970.500" y="7.500" width="8" height="7.500" fill="#2a2a2a" stroke="#fff" stroke-width="1.300"/>
<rect x="970" y="7" width="9" height="2" fill="#fff"/>
<rect x="983.500" y="5.500" width="12" height="11.500" rx="1.500" fill="#c46a54" stroke="#e8b8a8" stroke-width="0.800"/>
<path d="M985.500 7.500 L993.500 15 M993.500 7.500 L985.500 15" stroke="#fdf0e4" stroke-width="1.500"/>
</g>
<!-- TASKBAR -->
<g id="tbar">
<!-- start flag -->
<g>
<path d="M9 784.500 C11 783.500 13 783.800 14.500 784.800 L13.500 789.500 C12 788.500 10 788.300 8 789.200 Z" fill="#e8502a"/>
<path d="M15.500 785.200 C17.500 786 19.500 785.800 21.500 784.800 L20.500 789.500 C18.500 790.500 16.500 790.500 14.500 789.800 Z" fill="#7ac030"/>
<path d="M7.800 790.200 C9.800 789.300 11.800 789.500 13.300 790.500 L12.300 795.200 C10.800 794.200 8.800 794 6.800 795 Z" fill="#3a8ae0"/>
<path d="M14.300 790.800 C16.300 791.600 18.300 791.500 20.300 790.500 L19.300 795.200 C17.300 796.200 15.300 796.200 13.300 795.500 Z" fill="#f4c020"/>
</g>
<g fill="#5a5a5a"><rect x="30" y="785" width="1" height="1"/><rect x="32" y="787" width="1" height="1"/><rect x="30" y="789" width="1" height="1"/><rect x="32" y="791" width="1" height="1"/><rect x="30" y="793" width="1" height="1"/><rect x="32" y="795" width="1" height="1"/></g>
<!-- buttons -->
<g stroke="#161616" stroke-width="1">
<rect x="39.500" y="781.500" width="117" height="18" rx="2" fill="url(#gBtn)"/>
<rect x="159.500" y="781.500" width="117" height="18" rx="2" fill="url(#gBtn)"/>
<rect x="279.500" y="781.500" width="119" height="18" rx="2" fill="url(#gBtn)"/>
<rect x="401.500" y="781.500" width="117" height="18" rx="2" fill="url(#gBtn)"/>
<rect x="521.500" y="781.500" width="116" height="18" rx="2" fill="url(#gBtn)"/>
<rect x="640.500" y="781.500" width="116" height="18" rx="2" fill="#0a0a0a" stroke="#3a3a3a"/>
<rect x="759.500" y="781.500" width="117" height="18" rx="2" fill="url(#gBtn)"/>
</g>
<!-- folder icons -->
<g transform="translate(-0.7 -0.6)">
<path d="M47 786 L51 785 L52 786.500 L56.500 786 L57 796 L47.500 797 Z" fill="url(#gFold)" stroke="#a88a20" stroke-width="0.500"/>
<path d="M52 787 L56.500 786.500 L57 796 L52.500 796.500 Z" fill="#e8cc60"/>
<path d="M167 786 L171 785 L172 786.500 L176.500 786 L177 796 L167.500 797 Z" fill="url(#gFold)" stroke="#a88a20" stroke-width="0.500"/>
<path d="M172 787 L176.500 786.500 L177 796 L172.500 796.500 Z" fill="#e8cc60"/>
</g>
<!-- excel icon -->
<g>
<rect x="285.500" y="785" width="11" height="11" rx="1" fill="#e8f4e8" stroke="#2a7a3a" stroke-width="0.800"/>
<rect x="286.500" y="786" width="6.500" height="9" fill="#2a8a3e"/>
<path d="M287.800 787.800 L291.800 793.300 M291.800 787.800 L287.800 793.300" stroke="#fff" stroke-width="1.200"/>
</g>
<path d="M389 788.500 L394 788.500 L391.500 791.500 Z" fill="#e8e8e8"/>
<!-- firefox icon -->
<g>
<circle cx="411.500" cy="790.500" r="5.800" fill="#e8781a"/>
<circle cx="411.800" cy="790" r="3.300" fill="#3a5ac8"/>
<path d="M406 789 C407 785.500 411 784 414.500 785.500 C412 786 410 787 410 789.500 C410 792 413 793.500 415.500 792 C414 795.500 409.500 797 407 794 C405.800 792.500 405.600 790.500 406 789 Z" fill="#f09a20"/>
<path d="M406.500 786.500 C408 785 410 784.500 411.500 784.800" stroke="#f8d040" stroke-width="0.800" fill="none"/>
</g>
<!-- opera icon -->
<g>
<ellipse cx="530" cy="790.500" rx="5.500" ry="6" fill="#d41a1a" stroke="#f08a8a" stroke-width="0.600"/>
<ellipse cx="530" cy="790.500" rx="2.200" ry="4" fill="#6a0a0a" stroke="#f4b0b0" stroke-width="0.500"/>
</g>
<!-- sketchup icons -->
<g>
<path d="M645.500 794.500 L647 789 L652.500 784.500 L655.500 787.500 L650 794 Z" fill="#d8241c" stroke="#f0e0d0" stroke-width="0.800"/>
<path d="M645.500 794.500 L647 790.500 L649.500 793.500 Z" fill="#f0d8b0"/>
<path d="M648 796.500 L654.500 792.500" stroke="#ddd" stroke-width="0.800"/>
<path d="M765.500 794.500 L767 789 L772.500 784.500 L775.500 787.500 L770 794 Z" fill="#d8241c" stroke="#f0e0d0" stroke-width="0.800"/>
<path d="M765.500 794.500 L767 790.500 L769.500 793.500 Z" fill="#f0d8b0"/>
<path d="M768 796.500 L774.500 792.500" stroke="#ddd" stroke-width="0.800"/>
</g>
<g fill="#5a5a5a"><rect x="882" y="785" width="1" height="1"/><rect x="884" y="787" width="1" height="1"/><rect x="882" y="789" width="1" height="1"/><rect x="884" y="791" width="1" height="1"/><rect x="882" y="793" width="1" height="1"/><rect x="884" y="795" width="1" height="1"/></g>
<!-- EN box -->
<rect x="892" y="784" width="13" height="12" fill="#5a5e62"/>
<!-- tray icons -->
<rect x="922" y="784.500" width="11" height="11" rx="2" fill="#2ab4d8" stroke="#8ae0f4" stroke-width="0.800"/>
<circle cx="927.500" cy="790" r="3" fill="none" stroke="#fff" stroke-width="1.200"/>
<rect x="936" y="786" width="7" height="6" fill="#8a8e92" stroke="#b8bcc0" stroke-width="0.500"/>
<rect x="940" y="784.500" width="6" height="6" fill="#6a6e72" stroke="#a8acb0" stroke-width="0.500"/>
<rect x="938" y="793" width="5" height="2" fill="#9a9ea2"/>
<path d="M949 788.500 L951 788.500 L953.500 786 L953.500 795 L951 792.500 L949 792.500 Z" fill="#e8e8e8"/>
<path d="M955 788 C956 789.500 956 791.500 955 793 M956.800 786.500 C958.300 789 958.300 792 956.800 794.500" stroke="#3ad040" stroke-width="0.900" fill="none"/>
</g>
<!--/TASKBAR-->
</svg>
<!--/CHROME-->
<!--TEXTS-->
<div class="tx" style="left:7px;top:22.6px;font-size:8.7px;line-height:10.44px;transform:scaleX(0.9286);color:#000;">File</div>
<div class="tx" style="left:29px;top:22.6px;font-size:8.7px;line-height:10.44px;transform:scaleX(0.9343);color:#000;">Edit</div>
<div class="tx" style="left:53px;top:22.6px;font-size:8.7px;line-height:10.44px;transform:scaleX(0.9365);color:#000;">View</div>
<div class="tx" style="left:79px;top:22.6px;font-size:8.7px;line-height:10.44px;transform:scaleX(0.9383);color:#000;">Camera</div>
<div class="tx" style="left:118px;top:22.6px;font-size:8.7px;line-height:10.44px;transform:scaleX(0.9368);color:#000;">Draw</div>
<div class="tx" style="left:147px;top:22.6px;font-size:8.7px;line-height:10.44px;transform:scaleX(0.9368);color:#000;">Tools</div>
<div class="tx" style="left:176px;top:22.6px;font-size:8.7px;line-height:10.44px;transform:scaleX(0.9383);color:#000;">Window</div>
<div class="tx" style="left:214.5px;top:22.6px;font-size:8.7px;line-height:10.44px;transform:scaleX(0.9231);color:#000;">Help</div>
<div class="tx" style="left:20.8px;top:5.84px;font-size:10.0px;line-height:12.0px;letter-spacing:0.257px;color:#fff;font-weight:bold;text-shadow:0 0 2px #000,0 0 1px #000;">2.skp - SketchUp</div>
<div class="tx" style="left:99px;top:86.07px;font-size:8.7px;line-height:10.44px;transform:scaleX(0.9238);color:#000;">Cut</div>
<div class="tx" style="left:654px;top:68.60px;font-size:9.4px;line-height:11.28px;transform:scaleX(0.8894);color:#000;">Layer0</div>
<div class="tx" style="left:22px;top:758.07px;font-size:8.7px;line-height:10.44px;transform:scaleX(0.9396);color:#000;">Measurements</div>
<div class="tx" style="left:61px;top:785.19px;font-size:9.2px;line-height:11.04px;transform:scaleX(0.9190);color:#fff;">D:\РОБОЧА ПАПКА...</div>
<div class="tx" style="left:180.4px;top:785.19px;font-size:9.2px;line-height:11.04px;transform:scaleX(0.9396);color:#fff;">C:\Documents and ...</div>
<div class="tx" style="left:300.4px;top:785.19px;font-size:9.2px;line-height:11.04px;transform:scaleX(0.9577);color:#fff;"><b>7</b> Microsoft Office ...</div>
<div class="tx" style="left:420px;top:785.19px;font-size:9.2px;line-height:11.04px;transform:scaleX(0.8970);color:#fff;">Вхідні - Mozilla Firefox</div>
<div class="tx" style="left:539.4px;top:785.19px;font-size:9.2px;line-height:11.04px;transform:scaleX(0.9686);color:#fff;">Какая крыша лучш...</div>
<div class="tx" style="left:661px;top:785.19px;font-size:9.2px;line-height:11.04px;transform:scaleX(0.8947);color:#fff;">2.skp - SketchUp</div>
<div class="tx" style="left:780px;top:785.19px;font-size:9.2px;line-height:11.04px;transform:scaleX(0.8927);color:#fff;">Welcome to SketchUp</div>
<div class="tx" style="left:893.5px;top:785.85px;font-size:8.4px;line-height:10.08px;transform:scaleX(0.8419);color:#fff;">EN</div>
<div class="tx" style="left:968px;top:785.19px;font-size:9.2px;line-height:11.04px;transform:scaleX(0.9348);color:#fff;">12:07</div>
<!--/TEXTS-->
</body>
</html>
